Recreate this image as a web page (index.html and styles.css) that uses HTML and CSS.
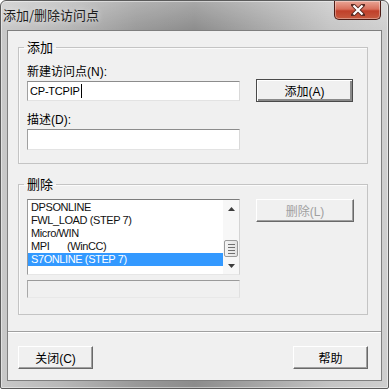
FILE: index.html
```html
<!DOCTYPE html>
<html lang="zh-CN">
<head>
    <meta charset="UTF-8">
    <title>添加/删除访问点</title>
    <link rel="stylesheet" href="styles.css">
</head>
<body>
    <div class="window">
        <div class="titlebar">
            <span class="title">添加/删除访问点</span>
            <button class="close" type="button">
                <svg width="14" height="12" viewBox="0 0 14 12">
                    <path d="M2 1 L12 11 M12 1 L2 11" stroke="#5a2a22" stroke-width="4" stroke-linecap="square"/>
                    <path d="M2.5 1.5 L11.5 10.5 M11.5 1.5 L2.5 10.5" stroke="#ffffff" stroke-width="2.2"/>
                </svg>
            </button>
        </div>

        <div class="client">
            <!-- add group -->
            <fieldset class="group group-add">
                <legend>添加</legend>
                <div class="group-body">
                    <div class="fields">
                        <label class="lbl">新建访问点(N):</label>
                        <div class="edit edit-name">CP-TCPIP<span class="caret"></span></div>
                        <label class="lbl lbl-desc">描述(D):</label>
                        <div class="edit edit-desc"></div>
                    </div>
                    <button class="btn btn-default btn-add" type="button">添加(A)</button>
                </div>
            </fieldset>

            <!-- delete group -->
            <fieldset class="group group-del">
                <legend>删除</legend>
                <div class="group-body">
                    <div class="fields">
                        <div class="listbox">
                            <ul class="items">
                                <li>DPSONLINE</li>
                                <li>FWL_LOAD (STEP 7)</li>
                                <li>Micro/WIN</li>
                                <li><span class="col">MPI</span>(WinCC)</li>
                                <li class="selected">S7ONLINE (STEP 7)</li>
                            </ul>
                            <div class="vscroll">
                                <div class="arrow">
                                    <svg width="7" height="4" viewBox="0 0 7 4"><path d="M0 4 L3.5 0 L7 4 Z" fill="#3c3c3c"/></svg>
                                </div>
                                <div class="track">
                                    <div class="thumb">
                                        <i></i><i></i><i></i><i></i>
                                    </div>
                                </div>
                                <div class="arrow">
                                    <svg width="7" height="4" viewBox="0 0 7 4"><path d="M0 0 L7 0 L3.5 4 Z" fill="#3c3c3c"/></svg>
                                </div>
                            </div>
                        </div>
                        <div class="status"></div>
                    </div>
                    <button class="btn btn-del" type="button" disabled>删除(L)</button>
                </div>
            </fieldset>

            <div class="separator"></div>

            <div class="footer">
                <button class="btn btn-foot" type="button">关闭(C)</button>
                <button class="btn btn-foot" type="button">帮助</button>
            </div>
        </div>
    </div>
</body>
</html>
```

FILE: styles.css
```css
* {
    box-sizing: border-box;
}

body {
    margin: 0;
    background: #ffffff;
    color: #000;
    font-family: "Liberation Sans", "Noto Sans CJK SC", sans-serif;
    font-size: 12px;
}

.window {
    width: 389px;
    height: 389px;
    display: flex;
    flex-direction: column;
    padding: 0 6px 7px 6px;
    border: 1px solid #5b5b5b;
    border-radius: 6px 6px 2px 2px;
    background:
        linear-gradient(to bottom, rgba(255, 255, 255, 0.25), rgba(255, 255, 255, 0) 30px),
        linear-gradient(to right, #c9c9c9 0%, #b9b9b9 15%, #999 35%, #8c8c8c 50%, #a3a3a3 65%, #c4c4c4 85%, #cfcfcf 100%);
    box-shadow: inset 0 0 0 1px rgba(255, 255, 255, 0.45);
}

.titlebar {
    height: 29px;
    margin: 0 -6px;
    display: flex;
    align-items: flex-start;
    justify-content: space-between;
    padding: 0 7px 0 2px;
}

.title {
    font-family: "Noto Sans CJK SC", sans-serif;
    font-size: 13px;
    line-height: 16px;
    padding-top: 6px;
    color: #1c1c1c;
    text-shadow: 0 0 6px rgba(255, 255, 255, 0.8);
}

.close {
    width: 47px;
    height: 19px;
    margin: 0;
    padding: 0;
    border: 1px solid #4e1c15;
    border-top: none;
    border-radius: 0 0 5px 5px;
    background: linear-gradient(to bottom, #e9a596 0%, #d8705c 45%, #c0402a 55%, #c65a3f 100%);
    box-shadow: inset 0 0 0 1px rgba(255, 255, 255, 0.35);
    display: flex;
    align-items: center;
    justify-content: center;
}

.client {
    flex: 1;
    border: 1px solid #7f7f7f;
    background: #f0f0f0;
    padding: 9px 12px 0 10px;
    display: flex;
    flex-direction: column;
}

.group {
    width: 350px;
    margin: 0;
    border: 1px solid #c4c4c4;
    box-shadow: inset 1px 1px 0 #fbfbfb;
    min-width: 0;
}

.group legend {
    font-family: "Noto Sans CJK SC", sans-serif;
    font-size: 13px;
    line-height: 14px;
    padding: 0 3px;
    margin-left: -3px;
}

.group-add {
    padding: 11px 8px 13px 8px;
}

.group-del {
    margin-top: 13px;
    padding: 8px 8px 16px 8px;
}

.group-body {
    display: flex;
    align-items: flex-start;
    gap: 16px;
}

.fields {
    width: 213px;
}

.lbl {
    display: block;
    line-height: 14px;
}

.lbl-desc {
    margin-top: 12px;
}

.edit {
    margin-top: 2px;
    background: #fff;
    border: 1px solid;
    border-color: #8c8c8c #d9d9d9 #e3e3e3 #a0a0a0;
    padding: 2px 2px 0 2px;
    font-size: 11px;
    line-height: 15px;
    letter-spacing: -0.2px;
}

.edit-name {
    height: 20px;
}

.edit-desc {
    height: 21px;
}

.caret {
    display: inline-block;
    width: 1px;
    height: 14px;
    background: #000;
    vertical-align: -3px;
    margin-left: 1px;
}

.btn {
    font-family: "Liberation Sans", "Noto Sans CJK SC", sans-serif;
    font-size: 12px;
    color: #000;
    height: 23px;
    padding: 0;
    background: #f0f0f0;
    border: 1px solid;
    border-color: #ffffff #696969 #696969 #ffffff;
    box-shadow: inset -1px -1px 0 #a0a0a0;
}

.btn-default {
    border: 1px solid #4a4a4a;
    box-shadow: inset 1px 1px 0 #fff, inset -2px -2px 0 #8a8a8a;
}

.btn-add {
    width: 97px;
    margin-top: 14px;
}

.btn-del {
    width: 98px;
    color: #a0a0a0;
}

.listbox {
    height: 76px;
    display: flex;
    background: #fff;
    border: 1px solid;
    border-color: #7c7c7c #d4d4d4 #e6e6e6 #9a9a9a;
}

.items {
    flex: 1;
    list-style: none;
    margin: 0;
    padding: 1px 0 0 0;
    font-size: 11px;
    line-height: 13px;
    letter-spacing: -0.4px;
    color: #111;
}

.items li {
    padding-left: 3px;
    white-space: nowrap;
}

.items .col {
    display: inline-block;
    width: 36px;
}

.items .selected {
    background: #3399ff;
    color: #fff;
}

.vscroll {
    width: 16px;
    display: flex;
    flex-direction: column;
    background: #f7f7f7;
}

.arrow {
    height: 17px;
    display: flex;
    align-items: center;
    justify-content: center;
}

.track {
    flex: 1;
    display: flex;
    flex-direction: column;
    justify-content: flex-end;
}

.thumb {
    height: 17px;
    margin: 0 1px;
    border: 1px solid #9a9a9a;
    border-radius: 2px;
    background: linear-gradient(to right, #f4f4f4, #e2e2e2);
    display: flex;
    flex-direction: column;
    justify-content: center;
    align-items: center;
    gap: 2px;
}

.thumb i {
    display: block;
    width: 7px;
    height: 1px;
    background: #6f6f6f;
}

.status {
    height: 18px;
    margin-top: 5px;
    border: 1px solid;
    border-color: #9a9a9a #e0e0e0 #e8e8e8 #a8a8a8;
    background: #f0f0f0;
}

.separator {
    height: 2px;
    margin: 16px -12px 0 -10px;
    border-top: 1px solid #a0a0a0;
    border-bottom: 1px solid #ffffff;
}

.footer {
    width: 350px;
    margin-top: 13px;
    display: flex;
    justify-content: space-between;
}

.btn-foot {
    width: 75px;
}
```
